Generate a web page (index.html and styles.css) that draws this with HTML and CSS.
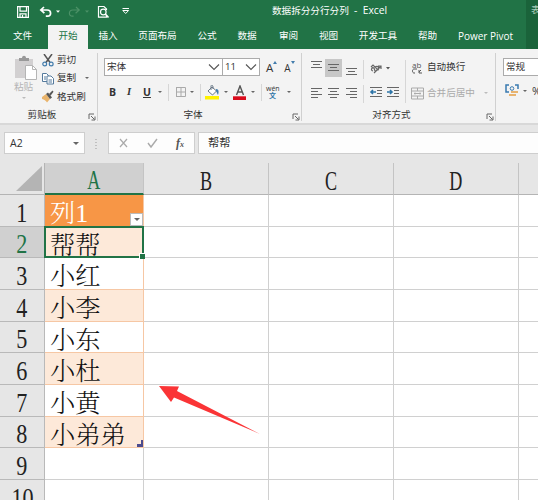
FILE: index.html
```html
<!DOCTYPE html>
<html lang="zh-CN">
<head>
<meta charset="utf-8">
<title>数据拆分分行分列 - Excel</title>
<link rel="stylesheet" href="styles.css">
</head>
<body>
<div class="app">
  <header class="top">
    <div class="main-top">
      <div class="titlebar">
        <svg class="quick" width="136" height="25" viewBox="0 0 136 25" fill="none" stroke="#fff" stroke-width="1.2">
          <path d="M17.6 6.6h10.8v10.8H17.6zM20 6.8v4.4h6.500V6.800M20 17.300v-3.500h6v3.500M22.500 15v2"/>
          <path d="M44 7l-3.200 3 3.600 3.200M41.200 10h6c4.500 0 4.500 6.500.2 6.200h-1.600" stroke-width="1.700"/>
          <path d="M56 10.500h4l-2 2.300z" fill="#fff" stroke="none"/>
          <g stroke="#4c9167"><path d="M76 7l3.200 3-3.600 3.200M78.800 10h-6c-4.500 0-4.500 6.500-.2 6.200h1"/><path d="M85 10.500h4l-2 2.300z" fill="#4c9167" stroke="none"/></g>
          <path d="M106.500 15.500v1.700h-8V6.500h5.500l2.500 2.500v1"/><circle cx="103.300" cy="12" r="2.800"/><path d="M105.300 14l3.200 3.500" stroke-width="1.700"/>
          <path d="M122.500 8.500h6.500M122.800 10.500l2.900 3 2.900-3z" stroke-width="1"/>
        </svg>
        <span class="doc-title">数据拆分分行分列<span class="app-name">&nbsp; - &nbsp;Excel</span></span>
      </div>
      <nav class="tabs">
        <span class="file">文件</span><span class="active">开始</span><span>插入</span><span class="wide">页面布局</span><span>公式</span><span>数据</span><span class="spaced">审阅</span><span>视图</span><span class="wide">开发工具</span><span>帮助</span><span class="pivot">Power Pivot</span>
      </nav>
    </div>
    <div class="context">表</div>
  </header>

  <section class="ribbon">
    <div class="group clipboard">
      <div class="clip-body">
        <div class="paste">
          <svg width="24" height="26" viewBox="0 0 24 26"><path d="M1 4h18v19H1z" fill="#d2d0d1"/><path d="M5 6V3h3c0-3 4-3 4 0h3v3z" fill="#999"/><path d="M11.500 10.500h7l4 4v10h-11z" fill="#fff" stroke="#b5b5b5"/><path d="M18.500 10.500v4h4" fill="none" stroke="#b5b5b5"/></svg>
          <span>粘贴</span>
          <i class="caret pale"></i>
        </div>
        <div class="clip-actions">
          <div><svg width="12" height="13" viewBox="0 0 12 13" fill="none"><path d="M2 0l6 8.500M10 0L4 8.500" stroke="#555" stroke-width="1.500"/><circle cx="2.700" cy="10" r="1.900" stroke="#427cac" stroke-width="1.200"/><circle cx="9.200" cy="10" r="1.900" stroke="#427cac" stroke-width="1.200"/></svg><span>剪切</span></div>
          <div><svg width="12" height="13" viewBox="0 0 12 13" fill="#fff" stroke="#557a9c"><path d="M.5 1.500h4l2 2v6h-6z"/><path d="M5 4h4l2.500 2.500V12H5zM6.500 8H10M6.500 10H10M2 5h2M2 7h2"/></svg><span>复制</span><i class="caret"></i></div>
          <div><svg width="12" height="13" viewBox="0 0 12 13"><path d="M0 7l4-3 4 5-3 3.500c-1-2-3-3-5-3.500z" fill="#e9b46c"/><path d="M4 4l2-1.500 4 5L8 9z" fill="#555"/><path d="M7 4l3.500-3.500 1 1.200-3 4z" fill="#555"/></svg><span>格式刷</span></div>
        </div>
      </div>
      <footer><span>剪贴板</span><svg class="launch" width="8" height="8" viewBox="0 0 8 8"><path d="M1 6V1h5M3 3l3.500 3.500M7 3.500V7H3.500" fill="none" stroke="#666"/></svg></footer>
    </div>

    <div class="group font">
      <div class="font-row">
        <div class="select face"><span>宋体</span><svg width="12" height="7" viewBox="0 0 12 7"><path d="M1 .5l5 5 5-5" fill="none" stroke="#555" stroke-width="1.100"/></svg></div>
        <div class="select size"><span>11</span><svg width="12" height="7" viewBox="0 0 12 7"><path d="M1 .5l5 5 5-5" fill="none" stroke="#555" stroke-width="1.100"/></svg></div>
        <span class="grow">A<svg width="4" height="3" viewBox="0 0 4 3"><path d="M0 3l2-3 2 3z" fill="#427cac"/></svg></span><span class="grow less">A<svg width="4" height="3" viewBox="0 0 4 3"><path d="M0 0l2 3 2-3z" fill="#427cac"/></svg></span>
      </div>
      <div class="format-row">
        <b>B</b><em>I</em><u>U</u><i class="caret"></i><i class="bar"></i>
        <svg width="10" height="12" viewBox="0 0 10 12"><path d="M0 1.500h9.500v9H0M.5 1v9M5 1.500v9M0 6h9.500" fill="none" stroke="#aaa"/></svg><i class="caret"></i><i class="bar"></i>
        <svg width="15" height="15" viewBox="0 0 15 15"><path d="M3 6l4-4 4.500 4-4 4zM6 5V1c0-1.500 2-1 2 1v2" fill="#fff" stroke="#687785"/><path d="M11 4c3 0 3 3 2 6-1-1-1-3-2-4" fill="#427cac"/><path d="M0 11h14v3.500H0z" fill="#fff200"/></svg><i class="caret"></i>
        <svg width="14" height="15" viewBox="0 0 14 15"><path d="M3.500 10L7 1l3.500 9M5 7h4" fill="none" stroke="#555" stroke-width="1.400"/><path d="M0 11.300h13V15H0z" fill="#d90b1c"/></svg><i class="caret"></i><i class="bar"></i>
        <span class="phonetic"><span>wén</span><span>文</span></span><i class="caret"></i>
      </div>
      <footer><span>字体</span><svg class="launch" width="8" height="8" viewBox="0 0 8 8"><path d="M1 6V1h5M3 3l3.500 3.500M7 3.500V7H3.500" fill="none" stroke="#666"/></svg></footer>
    </div>

    <div class="group align">
      <div class="align-body">
        <svg class="align-icons" width="102" height="48" viewBox="0 0 102 48" fill="none" stroke="#666">
          <path d="M23 2h17v18H23z" fill="#c7c7c7" stroke="none"/>
          <path d="M9 4.500h11M11 7.500h7M9 10.500h11M26 7.500h11M28 10.500h7M26 13.500h11M44 11.500h11M46 14.500h7M44 17.500h11"/>
          <path d="M9 31.500h11M9 34.500h7M9 37.500h11M9 40.500h7M26 31.500h11M28 34.500h7M26 37.500h11M28 40.500h7M44 31.500h11M48 34.500h7M44 37.500h11M48 40.500h7"/>
          <path d="M61.500 3v19M61.500 28v18M103.500 3v43" stroke="#d6d6d6"/>
          <path d="M71 14c-3-1-1-4 1-3l1 3M69 10l2-2 5 5c2-2 0-5-3-3M72 16l7-7m-3 0h3v3" stroke-width="1.200"/>
          <path d="M84 10h4l-2 2.500z" fill="#555" stroke="none"/>
          <path d="M68 30.500h12M75 33.500h5M75 36.500h5M68 39.500h12M85 30.500h12M92 33.500h5M92 36.500h5M85 39.500h12"/>
          <path d="M74 35h-5m2-2l-2 2 2 2M85 35h5m-2-2l2 2-2 2" stroke="#2e75a8" stroke-width="1.600"/>
        </svg>
        <div class="wrap-actions">
          <div><svg width="13" height="13" viewBox="0 0 13 13"><text x="1" y="6.500" class="ab">ab</text><path d="M6 8H3c-2 0-2 4 0 4h1M8 11l2-2M8 9v3h3" fill="none" stroke="#555"/></svg><span>自动换行</span></div>
          <div class="disabled"><svg width="13" height="13" viewBox="0 0 13 13" fill="none" stroke="#aaa"><path d="M.5 1h12v11H.5zM.5 4h12M.5 9h12M6.500 1v3M6.500 9v3M3 6.500h7M4 5.500v2M9 5.500v2"/></svg><span>合并后居中</span><i class="caret pale"></i></div>
        </div>
      </div>
      <footer><span>对齐方式</span><svg class="launch" width="8" height="8" viewBox="0 0 8 8"><path d="M1 6V1h5M3 3l3.500 3.500M7 3.500V7H3.500" fill="none" stroke="#666"/></svg></footer>
    </div>

    <div class="group number">
      <div class="select">常规</div>
      <div class="currency"><svg width="15" height="14" viewBox="0 0 15 14"><path d="M1 5V1h3M10 1h3v4M1 5v3h3" fill="none" stroke="#397ab0" stroke-width="1.500"/><circle cx="7" cy="4.500" r="1.800" fill="none" stroke="#397ab0"/><path d="M6 7h7v2H6zM4 10h7v2H4z" fill="#e8b36f"/></svg><i class="caret"></i><span>%</span></div>
    </div>
  </section>

  <section class="formula">
    <div class="name-box"><span>A2</span><i class="caret"></i></div>
    <svg class="dots" width="2" height="11" viewBox="0 0 2 11"><path d="M1 1v10" stroke="#999" stroke-dasharray="1 2"/></svg>
    <div class="fx"><svg width="40" height="12" viewBox="0 0 40 12" fill="none" stroke="#aaa" stroke-width="1.200"><path d="M1 2l7 8M8 2l-7 8"/><path d="M29 6l3 4 6-8" stroke-width="1.400"/></svg><em>f<small>x</small></em></div>
    <div class="value">帮帮</div>
  </section>

  <main class="sheet">
    <div class="corner"><svg width="26" height="25" viewBox="0 0 26 25"><path d="M0 25L26 0v25z" fill="#b4b4b4"/></svg></div>
    <div class="col selected"><span>A</span></div><div class="col"><span>B</span></div><div class="col"><span>C</span></div><div class="col"><span>D</span></div><div class="col"></div>

    <div class="row-no"><span>1</span></div><div class="cell head">列<span class="num">1</span><b class="filter"><i class="caret"></i></b></div><div class="cell"></div><div class="cell"></div><div class="cell"></div><div class="cell"></div>
    <div class="row-no selected"><span>2</span></div><div class="cell item band current">帮帮</div><div class="cell"></div><div class="cell"></div><div class="cell"></div><div class="cell"></div>
    <div class="row-no"><span>3</span></div><div class="cell item">小红</div><div class="cell"></div><div class="cell"></div><div class="cell"></div><div class="cell"></div>
    <div class="row-no"><span>4</span></div><div class="cell item band">小李</div><div class="cell"></div><div class="cell"></div><div class="cell"></div><div class="cell"></div>
    <div class="row-no"><span>5</span></div><div class="cell item">小东</div><div class="cell"></div><div class="cell"></div><div class="cell"></div><div class="cell"></div>
    <div class="row-no"><span>6</span></div><div class="cell item band">小杜</div><div class="cell"></div><div class="cell"></div><div class="cell"></div><div class="cell"></div>
    <div class="row-no"><span>7</span></div><div class="cell item">小黄</div><div class="cell"></div><div class="cell"></div><div class="cell"></div><div class="cell"></div>
    <div class="row-no"><span>8</span></div><div class="cell item band">小弟弟<svg class="table-end" width="6" height="7" viewBox="0 0 6 7"><path d="M4 0h2v7H0V4h4z" fill="#4c4c8f"/></svg></div><div class="cell"></div><div class="cell"></div><div class="cell"></div><div class="cell"></div>
    <div class="row-no"><span>9</span></div><div class="cell"></div><div class="cell"></div><div class="cell"></div><div class="cell"></div><div class="cell"></div>
    <div class="row-no"><span>10</span></div><div class="cell"></div><div class="cell"></div><div class="cell"></div><div class="cell"></div><div class="cell"></div>
    <svg class="arrow" width="102" height="50" viewBox="0 0 102 50"><path d="M0 0l20 .5-2 4.500L101 48 15 11.500 12 16z" fill="#fa3436"/></svg>
  </main>
</div>
</body>
</html>
```
FILE: styles.css
```css
* { box-sizing: border-box; }
body { margin: 0; font: 9.6px/14px "Open Sans", "Noto Sans CJK SC", sans-serif; color: #333; }
svg { display: block; flex: none; }
.app { width: 538px; height: 500px; overflow: hidden; background: #fff; display: flex; flex-direction: column; }

.top { display: flex; height: 49px; flex: none; background: #217346; color: #fff; }
.main-top { width: 526px; flex: none; }
.titlebar { height: 25px; display: flex; }
.doc-title { margin: 3px 0 0 136px; white-space: nowrap; }
.app-name { font-size: 10.3px; }
.tabs { display: flex; height: 24px; }
.tabs span { width: 40px; text-align: center; line-height: 22px; white-space: nowrap; }
.tabs .file { width: 48px; padding-right: 3px; }
.tabs .wide { width: 59px; }
.tabs .active { background: #f3f3f3; color: #217346; }
.tabs .spaced { margin-left: 1.5px; }
.tabs .pivot { width: 76px; font-size: 10px; }
.context { width: 12px; padding: 3px 0 0 5px; overflow: hidden; background: #1a633a; color: #a9cbb7; }

.ribbon { display: flex; flex: none; height: 76px; background: #f3f3f3; border-bottom: 2px solid #d8d8d8; }
.group { height: 74px; position: relative; display: flex; flex-direction: column; flex: none; }
.group::after { content: ""; position: absolute; right: 0; top: 4px; bottom: 2px; border-right: 1px solid #d0d0d0; }
.group footer { display: flex; justify-content: center; margin-top: auto; height: 15px; line-height: 14px; }
.launch { position: absolute; right: 2px; bottom: 2px; }
.caret { display: block; flex: none; width: 0; height: 0; border: 2px solid transparent; border-top: 2.5px solid #666; border-bottom: 0; }
.pale { border-top-color: #bbb; }
.clipboard { width: 98px; }
.clip-body { display: flex; padding-top: 2px; }
.paste { width: 42px; padding: 4px 0 0 5px; display: flex; flex-direction: column; align-items: center; color: #b5b5b5; }
.paste svg { margin-left: 5px; }
.paste span { line-height: 12px; }
.paste .caret { margin-top: 4px; }
.clip-actions div { display: flex; align-items: center; height: 18.3px; gap: 3px; white-space: nowrap; }
.clip-actions .caret { margin-left: 6px; }
.clipboard footer { padding-right: 14px; }

.font { width: 204px; }
.font-row { display: flex; margin: 9px 0 0 6px; height: 18px; }
.select { height: 18px; border: 1px solid #ababab; background: #fff; display: flex; align-items: center; justify-content: space-between; padding: 0 2px; line-height: 16px; }
.face { width: 119px; }
.size { width: 38px; margin-left: -1px; }
.grow { display: flex; font-size: 11.5px; margin-left: 6px; line-height: 20px; }
.grow svg { margin-top: 3px; }
.less { font-size: 10px; margin-left: 7px; }
.format-row { display: grid; grid-template-columns: 18px 16px 15px 10px 8px 14px 10px 5px 19px 9px 18px 10px 5px 19px 10px; align-items: center; height: 22px; margin: 5px 0 0 11px; }
.format-row b, .format-row em, .format-row u { font-size: 10.5px; line-height: 16px; font-weight: 700; }
.format-row em { font-family: "Liberation Serif", serif; }
.format-row > :last-child { margin-left: 2px; }
.bar { width: 1px; height: 17px; background: #d6d6d6; }
.phonetic { display: flex; flex-direction: column; font-size: 7px; line-height: 7px; }
.phonetic span + span { color: #2e75a8; margin-left: 3px; font-weight: 700; }
.font footer { padding-right: 14px; }

.align { width: 194px; }
.align-body { display: flex; padding-top: 8px; }
.align-icons { overflow: visible; }
.wrap-actions { margin-left: 7px; }
.wrap-actions div { display: flex; align-items: center; height: 24px; gap: 3px; white-space: nowrap; }
.wrap-actions div:first-child { padding-bottom: 4px; }
.wrap-actions .caret { margin-left: 6px; }
.ab { font: 8px "Open Sans", sans-serif; fill: #555; }
.disabled { color: #aaa; }
.align footer { padding-right: 15px; }
.number { width: 43px; padding: 9px 0 0 7px; overflow: hidden; }
.number::after { display: none; }
.number .select { width: 60px; }
.currency { display: flex; align-items: center; height: 24px; margin: 3px 0 0 2px; font-size: 11px; }
.currency .caret { margin: 0 5px 0 3px; }

.formula { display: flex; flex: none; height: 38px; padding: 7px 0 0 4px; background: #e6e6e6; }
.name-box, .fx, .value { height: 22px; background: #fdfdfd; border: 1px solid #cecece; display: flex; align-items: center; }
.name-box { width: 81px; justify-content: space-between; padding: 0 5px; font-size: 10.5px; }
.name-box .caret { border-width: 3px 3px 0; }
.dots { margin: 6px 11px 0 10px; }
.fx { width: 87px; padding-left: 10px; }
.fx em { margin-left: 17px; font: italic bold 12px "Liberation Serif", serif; color: #555; }
.fx small { font-size: 8px; }
.value { flex: 1; margin-left: 3px; padding: 0 0 3px 9px; font-size: 11.2px; font-family: "Noto Sans CJK SC", sans-serif; border-right: 0; }

.sheet { position: relative; display: grid; flex: none; grid-template-columns: 45px 99px 125px 125px 125px 125px; grid-template-rows: 32px repeat(10, 31.66px); font-size: 25.3px; }
.corner { background: #e6e6e6; border: solid #b4b4b4; border-width: 0 1px 1px 0; padding: 3px 0 0 16px; }
.col { background: #e6e6e6; border-bottom: 1px solid #b4b4b4; border-right: 1px solid #c4c4c4; display: flex; align-items: center; justify-content: center; color: #222; padding-top: 4px; }
.col span, .row-no span { font: 27px/26px "Liberation Serif", serif; display: block; transform: scaleX(.67); }
.col.selected { background: #d0d0d0; border-bottom: 2px solid #217346; color: #217346; }
.row-no { background: #e6e6e6; border: solid #b9b9b9; border-width: 0 1px 1px 0; display: flex; align-items: center; justify-content: center; padding-top: 5px; color: #222; }
.row-no span { transform: scaleX(.82); }
.row-no.selected { background: #d0d0d0; color: #217346; }
.cell { border: solid #d0d0d0; border-width: 0 1px 1px 0; position: relative; white-space: nowrap; }
.item, .head { height: 100%; overflow: visible; font-family: "Noto Serif CJK SC", "Noto Sans CJK SC", serif; font-weight: 300; line-height: 29px; padding: 2px 0 0 5px; color: #111; border-color: #f6c7a4; }
.band { background: #fde9d9; }
.head { background: #f79646; color: #fff; }
.num { font-family: "Liberation Serif", serif; font-size: 26px; line-height: 1; }
.filter { position: absolute; right: 0; bottom: 0; width: 13px; height: 13px; background: #fff; border: 1px solid #bbb; display: flex; align-items: center; justify-content: center; }
.filter .caret { border-width: 3px 3px 0; }
.current::before { content: ""; position: absolute; inset: -1px; border: 2px solid #217346; z-index: 1; }
.current::after { content: ""; position: absolute; right: -2px; bottom: -2px; width: 5px; height: 5px; background: #217346; border: solid #fff; border-width: 1px 0 0 1px; z-index: 2; }
.table-end { position: absolute; right: 0; bottom: 0; }
.arrow { position: absolute; left: 159px; top: 223px; }
```
